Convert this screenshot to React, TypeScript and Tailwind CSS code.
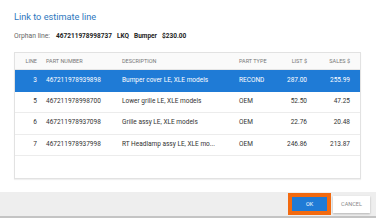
import React from "react";

const rows = [
  { line: "3", pn: "467211978939898", desc: "Bumper cover LE, XLE models", type: "RECOND", list: "287.00", sales: "255.99", sel: true },
  { line: "5", pn: "467211978998700", desc: "Lower grille LE, XLE models", type: "OEM", list: "52.50", sales: "47.25" },
  { line: "6", pn: "467211978937098", desc: "Grille assy LE, XLE models", type: "OEM", list: "22.76", sales: "20.48" },
  { line: "7", pn: "467211978937998", desc: "RT Headlamp assy LE, XLE mo...", type: "OEM", list: "246.86", sales: "213.87" },
];

export default function App() {
  return (
    <div className="w-[376px] h-[218px] bg-white flex flex-col font-['Roboto',sans-serif] overflow-hidden">
      <div className="px-[14px] pt-[11px] flex-1">
        <div className="text-[9.2px] leading-[12px] text-[#2f78be]">Link to estimate line</div>
        <div className="mt-[8px] leading-[10px] flex items-baseline">
          <span className="text-[#666] text-[6.8px]">Orphan line:</span>
          <span className="ml-[6px] font-bold text-[#222] text-[6.5px]">467211978998737</span>
          <span className="ml-[5px] font-bold text-[#222] text-[6.5px]">LKQ</span>
          <span className="ml-[5px] font-bold text-[#222] text-[6.5px]">Bumper</span>
          <span className="ml-[5px] font-bold text-[#222] text-[6.5px]">$230.00</span>
        </div>
        <div className="mt-[11px] w-[347px] h-[127px] border border-[#e2e2e2] shadow-[0_1px_1px_rgba(0,0,0,0.06)]">
          <div className="flex h-[17px] items-center bg-[#fafafa] text-[5.5px] text-[#777] uppercase border-b border-[#e6e6e6]">
            <div className="w-[26px] text-right pr-[4px]">Line</div>
            <div className="w-[78px] pl-[5px]">Part Number</div>
            <div className="w-[119px] pl-[3px]">Description</div>
            <div className="w-[38px] pl-[1px]">Part Type</div>
            <div className="w-[34px] text-right pr-[3px]">List $</div>
            <div className="flex-1 text-right pr-[10px]">Sales $</div>
          </div>
          {rows.map((r) => (
            <div
              key={r.line}
              className={
                r.sel
                  ? "flex h-[21.5px] items-center text-[6.5px] bg-[#1f7bd6] text-white"
                  : "flex h-[21.5px] items-center text-[6.5px] text-[#333] border-b border-[#ececec]"
              }
            >
              <div className="w-[26px] text-right pr-[4px]">{r.line}</div>
              <div className="w-[78px] pl-[5px]">{r.pn}</div>
              <div className="w-[119px] pl-[3px] whitespace-nowrap overflow-hidden">{r.desc}</div>
              <div className="w-[38px] pl-[1px]">{r.type}</div>
              <div className="w-[34px] text-right pr-[3px]">{r.list}</div>
              <div className="flex-1 text-right pr-[10px]">{r.sales}</div>
            </div>
          ))}
        </div>
      </div>
      <div className="h-[26px] bg-[#eeeeee] border-b-[2px] border-[#c4c4c4] flex items-center justify-end pr-[6px] gap-[2px]">
        <div className="w-[43px] h-[22px] bg-[#f26a10] p-[4px] flex">
          <div className="flex-1 bg-[#1f7bd6] flex items-center justify-center text-white text-[5.5px]">OK</div>
        </div>
        <div className="w-[37px] h-[17px] bg-white shadow-[0_1px_2px_rgba(0,0,0,0.25)] flex items-center justify-center text-[#888] text-[5.5px] uppercase">
          Cancel
        </div>
      </div>
    </div>
  );
}
